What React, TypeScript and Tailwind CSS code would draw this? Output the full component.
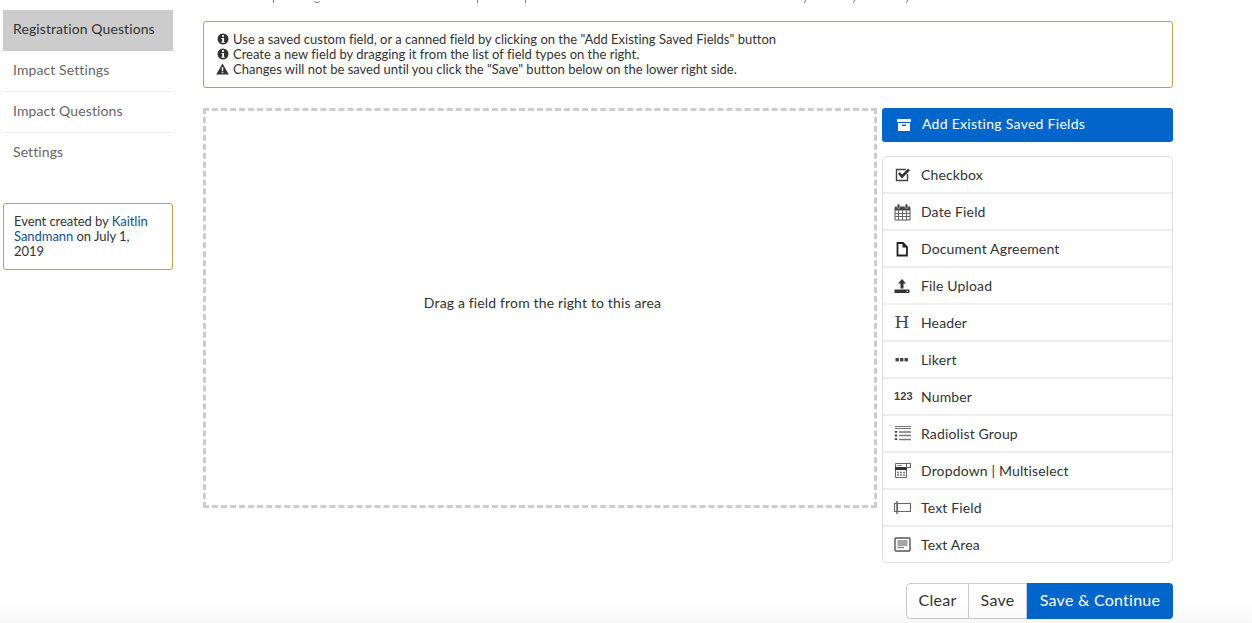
import type { ReactNode } from 'react'

const FIELDS: { label: string; icon: ReactNode }[] = [
  {
    label: 'Checkbox',
    icon: (
      <svg width="17" height="17" viewBox="0 0 17 17" fill="none">
        <path d="M13.5 8V14.5H2.5V3.5H12" stroke="#444" strokeWidth="1.4" />
        <path d="M5 7L8 10.5L15 3.5" stroke="#333" strokeWidth="2.6" />
      </svg>
    ),
  },
  {
    label: 'Date Field',
    icon: (
      <svg width="17" height="18" viewBox="0 0 17 18" fill="none">
        <path d="M1 4.5H16V17H1Z" fill="#fff" stroke="#555" strokeWidth="1" />
        <path d="M1 3.5H16V7.5H1Z" fill="#444" />
        <path d="M1 10.5H16M1 13.5H16M4.5 7.5V17M8.5 7.5V17M12.5 7.5V17" stroke="#666" strokeWidth="1" />
        <rect x="3.2" y="1" width="2.6" height="4.5" rx="1.2" fill="#444" stroke="#fff" strokeWidth=".5" />
        <rect x="11.2" y="1" width="2.6" height="4.5" rx="1.2" fill="#444" stroke="#fff" strokeWidth=".5" />
      </svg>
    ),
  },
  {
    label: 'Document Agreement',
    icon: (
      <svg width="16" height="16" viewBox="0 0 16 16" fill="none">
        <path d="M3.5 2H9L13 6V14.5H3.5Z" stroke="#222" strokeWidth="1.8" />
        <path d="M8.5 1.5V6.5H13.5" fill="#222" />
      </svg>
    ),
  },
  {
    label: 'File Upload',
    icon: (
      <svg width="16" height="16" viewBox="0 0 16 16">
        <path d="M8 1L12 5.5H9.5V10.5H6.5V5.5H4Z" fill="#333" />
        <path d="M.5 11.5H15.5V15H.5Z" fill="#333" />
        <rect x="12.5" y="12.8" width="1.5" height="1" fill="#fff" />
      </svg>
    ),
  },
  {
    label: 'Header',
    icon: <span className="w-[16px] text-center font-['DejaVu_Serif',serif] text-[17px] leading-none text-[#444]">H</span>,
  },
  {
    label: 'Likert',
    icon: (
      <svg width="16" height="16" viewBox="0 0 16 16" fill="#444">
        <rect x="1.5" y="6" width="3.4" height="3.4" />
        <rect x="6" y="6" width="3.4" height="3.4" />
        <rect x="10.5" y="6" width="3.4" height="3.4" />
      </svg>
    ),
  },
  {
    label: 'Number',
    icon: <span className="w-[18px] pb-[1px] font-['Liberation_Sans',sans-serif] text-[11px] font-bold leading-none text-[#444]">123</span>,
  },
  {
    label: 'Radiolist Group',
    icon: (
      <svg width="17" height="17" viewBox="0 0 17 17" fill="none" stroke="#777">
        <path d="M1 1.5H17M1 3.5H17" strokeWidth="1.2" />
        <path d="M5 7H17M5 10.5H17M5 14.5H17" strokeWidth="1.3" />
        <path d="M2 6V7.8M2 9.6V11.4M2 13.2V15" stroke="#444" strokeWidth="2.4" />
      </svg>
    ),
  },
  {
    label: 'Dropdown | Multiselect',
    icon: (
      <svg width="17" height="17" viewBox="0 0 17 17" fill="none">
        <path d="M1.5 1.5H12.5V15.5H1.5Z" stroke="#666" />
        <path d="M1 5H13V8H1Z" fill="#333" />
        <path d="M3 10.5H11M3 13H11" stroke="#777" strokeWidth="1.6" strokeDasharray="2 1" />
        <rect x="12.5" y="1.5" width="4" height="4" fill="#fff" stroke="#666" />
        <rect x="3" y="3" width="5" height="1" fill="#888" />
      </svg>
    ),
  },
  {
    label: 'Text Field',
    icon: (
      <svg width="17" height="17" viewBox="0 0 17 17" fill="none" stroke="#666">
        <path d="M3.5 4.5H16.5V12.5H3.5" strokeWidth="1.2" />
        <path d="M.5 4.5H3.5V12.5H.5Z" strokeWidth="1.2" />
        <path d="M3 2V15" strokeWidth="1.4" />
      </svg>
    ),
  },
  {
    label: 'Text Area',
    icon: (
      <svg width="17" height="17" viewBox="0 0 17 17" fill="none">
        <rect x="1" y="2" width="15" height="13" rx="1" stroke="#555" strokeWidth="1.4" />
        <path d="M3.5 5H13.5M3.5 7H13.5M3.5 9H13.5M3.5 11.5H10" stroke="#888" strokeWidth="1.4" />
      </svg>
    ),
  },
]

const InfoIcon = () => (
  <svg width="12" height="12" viewBox="0 0 12 12">
    <circle cx="6" cy="6" r="5.5" fill="#333" />
    <rect x="5" y="2" width="2" height="1.8" fill="#fff" />
    <path d="M4.4 5H7V8.7H7.8V9.8H4.4V8.7H5.2V6H4.4Z" fill="#fff" />
  </svg>
)

const WarnIcon = () => (
  <svg width="13" height="12" viewBox="0 0 13 12">
    <path d="M6.5 .5L12.8 11.5H.2Z" fill="#333" />
    <rect x="5.8" y="4" width="1.4" height="4" fill="#fff" />
    <rect x="5.8" y="8.8" width="1.4" height="1.4" fill="#fff" />
  </svg>
)

const NAV = ['Impact Settings', 'Impact Questions', 'Settings']

export default function App() {
  return (
    <div className="relative h-[623px] w-[1252px] overflow-hidden bg-white font-['Lato',sans-serif] text-[14px] text-[#333] [font-variant-ligatures:none]">
      {/* tails of the line scrolled off the top */}
      <svg width="700" height="4" className="absolute left-[260px] top-0" stroke="#777" fill="none">
        <path d="M13.5 0V3M217.5 0V3M265.5 0V3" />
        <path d="M54 1C55 3 59 3 60 1M546 0L544 3M595 0L593 3M648 0L646 3" />
      </svg>

      <div className="flex items-start">
        <div className="ml-[3px] mt-[10px] w-[170px] shrink-0">
          <div className="flex h-[41px] items-center bg-[#ccc] px-[10px] pb-[4px] tracking-[0.1px] text-[#333]">Registration Questions</div>
          {NAV.map((n, i) => (
            <div
              key={n}
              className={`flex h-[41px] items-center px-[10px] tracking-[0.1px] text-[#666] ${i < 2 ? 'border-b border-[#eee] pb-[3px]' : 'pb-[5px]'}`}
            >
              {n}
            </div>
          ))}
          <div className="mt-[29px] h-[67px] rounded-[3px] border border-[#c49a58] px-[10px] py-[10px] text-[13px] leading-[15px] tracking-[-0.05px]">
            Event created by <span className="text-[#0a4f9e]">Kaitlin Sandmann</span> on July 1, 2019
          </div>
        </div>

        <div className="ml-[30px] w-[970px] shrink-0 pt-[21px]">
          <div className="flex h-[67px] flex-col justify-center rounded-[3px] border border-[#c49a58] pb-[1px] pl-[12px] text-[13px] leading-[15px]">
            <div className="flex items-center gap-[4px]"><span className="flex w-[13px] justify-center"><InfoIcon /></span>Use a saved custom field, or a canned field by clicking on the "Add Existing Saved Fields" button</div>
            <div className="flex items-center gap-[4px]"><span className="flex w-[13px] justify-center"><InfoIcon /></span>Create a new field by dragging it from the list of field types on the right.</div>
            <div className="flex items-center gap-[4px]"><span className="flex w-[13px] justify-center"><WarnIcon /></span>Changes will not be saved until you click the "Save" button below on the lower right side.</div>
          </div>

          <div className="mt-[20px] flex items-start">
            <div className="flex h-[400px] w-[674px] shrink-0 items-center justify-center border-[3px] border-dashed border-[#ccc] pb-[12px] pl-[5px] tracking-[0.15px]">
              Drag a field from the right to this area
            </div>
            <div className="ml-[5px] w-[291px] shrink-0">
              <div className="flex h-[34px] items-center rounded-[3px] bg-[#0066cc] pb-[3px] pl-[15px] tracking-[0.28px] text-white">
                <svg width="14" height="14" viewBox="0 0 14 14" fill="#fff" className="mr-[11px] mt-[3px]">
                  <rect x="0" y="1" width="14" height="3" />
                  <path d="M1 5H13V13H1ZM5 6.5V8H9V6.5Z" fillRule="evenodd" />
                </svg>
                Add Existing Saved Fields
              </div>
              <div className="mt-[14px] overflow-hidden rounded-[5px] border border-[#ddd] tracking-[0.15px]">
                {FIELDS.map((f, i) => (
                  <div
                    key={f.label}
                    className={`flex items-center pl-[11px] ${i < FIELDS.length - 1 ? 'h-[37px] border-b-2 border-[#eee]' : 'h-[35px]'}`}
                  >
                    <span className="flex w-[27px] shrink-0 items-center">{f.icon}</span>
                    {f.label}
                  </div>
                ))}
              </div>
            </div>
          </div>

          <div className="mt-[20px] flex justify-end text-[16px] tracking-[0.25px]">
            <div className="flex h-[36px] w-[63px] items-center justify-center rounded-l-[4px] border border-[#ccc] pb-[2px]">Clear</div>
            <div className="flex h-[36px] w-[58px] items-center justify-center border-y border-r border-[#ccc] pb-[2px]">Save</div>
            <div className="flex h-[36px] w-[146px] items-center justify-center rounded-r-[4px] bg-[#0066cc] pb-[2px] text-white">Save &amp; Continue</div>
          </div>
        </div>
      </div>
      <div className="pointer-events-none absolute inset-x-0 bottom-0 h-[22px] bg-gradient-to-b from-transparent to-[#00000008]" />
    </div>
  )
}
